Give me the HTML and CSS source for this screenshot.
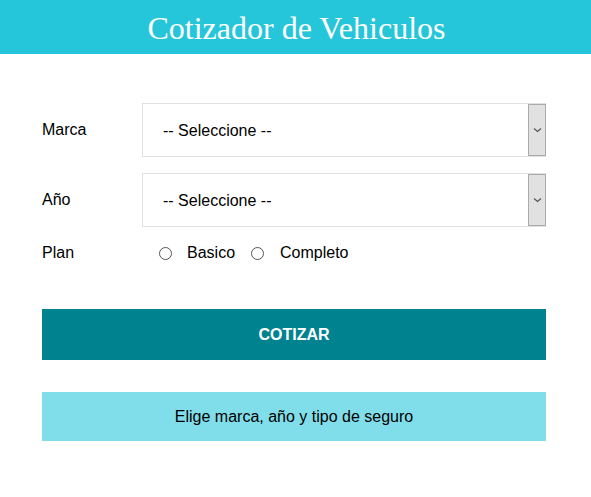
FILE: index.html
```html
<!DOCTYPE html>
<html lang="es">
<head>
<meta charset="utf-8">
<title>Cotizador de Vehiculos</title>
<link rel="stylesheet" href="styles.css">
</head>
<body>
<header class="header">
  <h1 class="title">Cotizador de Vehiculos</h1>
</header>
<main class="content">
  <form class="form">
    <div class="field">
      <label class="label" for="marca">Marca</label>
      <div class="select-box">
        <select id="marca" class="select"><option>-- Seleccione --</option></select>
        <span class="select-arrow"><svg width="9" height="6" viewBox="0 0 9 6"><path d="M1 1.5 L4.5 4.5 L8 1.5" fill="none" stroke="#555" stroke-width="1.2"/></svg></span>
      </div>
    </div>
    <div class="field">
      <label class="label" for="year">Año</label>
      <div class="select-box">
        <select id="year" class="select"><option>-- Seleccione --</option></select>
        <span class="select-arrow"><svg width="9" height="6" viewBox="0 0 9 6"><path d="M1 1.5 L4.5 4.5 L8 1.5" fill="none" stroke="#555" stroke-width="1.2"/></svg></span>
      </div>
    </div>
    <div class="field field-plan">
      <span class="label">Plan</span>
      <div class="radios">
        <label class="radio"><span class="radio-dot"></span>Basico</label>
        <label class="radio"><span class="radio-dot"></span>Completo</label>
      </div>
    </div>
    <button type="button" class="button">COTIZAR</button>
  </form>
  <div class="result">Elige marca, año y tipo de seguro</div>
</main>
</body>
</html>
```
FILE: styles.css
```css
* { box-sizing: border-box; }
body {
  margin: 0;
  font-family: "Liberation Sans", Arial, sans-serif;
  font-size: 16px;
  color: #000;
  background: #fff;
}
.header {
  background: #26c6da;
  height: 54px;
  display: flex;
  align-items: center;
  justify-content: center;
}
.title {
  margin: 0;
  color: #fff;
  font-family: "Liberation Serif", "Times New Roman", serif;
  font-weight: normal;
  font-size: 32px;
  line-height: 1;
  padding-top: 2px;
  padding-left: 2px;
}
.content {
  padding: 49px 45px 0 42px;
}
.form {
  display: flex;
  flex-direction: column;
}
.field {
  display: flex;
  align-items: center;
  margin-bottom: 16px;
}
.label {
  width: 100px;
  flex: none;
}
.select-box {
  flex: 1;
  height: 54px;
  border: 1px solid #e1e1e1;
  display: flex;
}
.select {
  flex: 1;
  appearance: none;
  -webkit-appearance: none;
  border: none;
  background: #fff;
  font-family: "Liberation Sans", Arial, sans-serif;
  font-size: 16px;
  color: #000;
  padding: 0 0 0 20px;
  outline: none;
}
.select-arrow {
  width: 18px;
  margin-right: -1px;
  background: #e1e1e1;
  border: 1px solid #aaa;
  display: flex;
  align-items: center;
  justify-content: center;
}
.field-plan {
  margin-top: -2px;
  margin-bottom: 44px;
  height: 24px;
}
.radios {
  display: flex;
  align-items: center;
}
.radio {
  display: flex;
  align-items: center;
  margin-left: 17px;
}
.radio + .radio { margin-left: 16px; }
.radio-dot {
  width: 13px;
  height: 13px;
  border: 1px solid #555;
  border-radius: 50%;
  margin-right: 15px;
  background: #fff;
}
.radio + .radio .radio-dot { margin-right: 16px; }
.button {
  height: 51px;
  border: none;
  background: #00838f;
  color: #fff;
  font-family: "Liberation Sans", Arial, sans-serif;
  font-size: 16px;
  font-weight: bold;
  width: 100%;
}
.result {
  margin-top: 32px;
  height: 49px;
  padding-top: 1px;
  background: #80deea;
  display: flex;
  align-items: center;
  justify-content: center;
  text-align: center;
}
```
